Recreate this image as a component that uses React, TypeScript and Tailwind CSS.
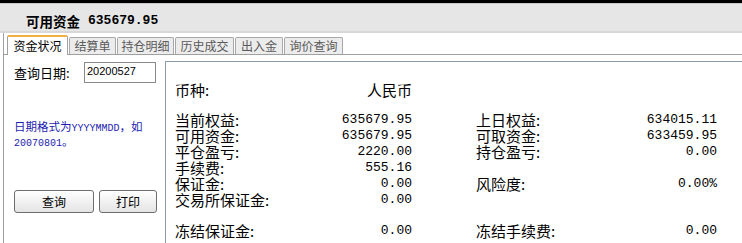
import React from "react";

const cjk = { fontFamily: '"Noto Sans CJK SC", sans-serif' };
const mono = { fontFamily: '"Liberation Mono", "Noto Sans CJK SC", monospace' };

function Cell({ label, value, className = "" }: { label?: string; value?: string; className?: string }) {
  return (
    <div className={"flex h-[16px] items-center justify-between leading-[16px] " + className}>
      <span className="text-[15px] leading-[16px] text-black whitespace-nowrap" style={cjk}>{label}</span>
      <span className="text-[13px] leading-[16px] text-black whitespace-nowrap" style={mono}>{value}</span>
    </div>
  );
}

const tabs = [
  { t: "资金状况", w: 61, active: true },
  { t: "结算单", w: 47 },
  { t: "持仓明细", w: 57 },
  { t: "历史成交", w: 59 },
  { t: "出入金", w: 48 },
  { t: "询价查询", w: 59 },
];

export default function App() {
  return (
    <div className="w-[742px] h-[243px] overflow-hidden bg-white flex flex-col" style={cjk}>
      <div className="h-[3px] bg-black shrink-0" />
      <div className="h-[1px] bg-[#c8c8c8] shrink-0" />
      <div className="h-[29px] bg-[#e6e6e6] shrink-0 flex items-center pl-[26px] pt-[7px] border-b-2 border-[#d8d8d8]">
        <span className="text-[13.5px] font-bold text-black" style={cjk}>可用资金</span>
        <span className="ml-[8px] text-[13px] font-bold text-black" style={mono}>635679.95</span>
      </div>
      <div className="ml-[3px] border-l border-[#a0a0a0] flex-1 flex flex-col">
        <div className="h-[21px] mt-[1px] shrink-0 flex items-end border-b border-[#a0a0a0] pl-[3px]">
          {tabs.map((tab) =>
            tab.active ? (
              <div
                key={tab.t}
                className="relative -mb-[1px] h-[20px] bg-white border-x border-[#a0a0a0] border-t-2 border-t-[#f0b040] rounded-t-[2px] flex items-center justify-center text-[12px] text-black"
                style={{ width: tab.w }}
              >
                {tab.t}
              </div>
            ) : (
              <div
                key={tab.t}
                className="h-[17px] ml-[1px] bg-[#ececec] border border-b-0 border-[#a8a8a8] rounded-t-[2px] flex items-center justify-center text-[12px] text-[#5a5a5a]"
                style={{ width: tab.w }}
              >
                {tab.t}
              </div>
            )
          )}
        </div>
        <div className="flex flex-1">
          <div className="w-[161px] shrink-0 pl-[10px]">
            <div className="mt-[7px] flex items-center h-[21px]">
              <span className="text-[13px] text-black w-[70px] whitespace-nowrap">查询日期:</span>
              <div
                className="w-[72px] h-[21px] border border-[#8a8a8a] bg-white pl-[2px] text-[11px] leading-[17px] text-black"
                style={{ fontFamily: '"Liberation Sans", sans-serif' }}
              >
                20200527
              </div>
            </div>
            <div className="mt-[37px] text-[#1c1cb0] text-[11.5px] leading-[12px]">
              <div className="whitespace-nowrap">
                日期格式为<span className="text-[10px]" style={mono}>YYYYMMDD</span>，如
              </div>
              <div className="whitespace-nowrap">
                <span className="text-[10px]" style={mono}>20070801</span>。
              </div>
            </div>
            <div className="mt-[40px] flex gap-[5px]">
              <button className="w-[80px] h-[23px] rounded-[3px] border border-[#6e6e6e] bg-gradient-to-b from-white to-[#e4e4e4] text-[12px] text-black flex items-center justify-center">
                查询
              </button>
              <button className="w-[58px] h-[23px] rounded-[3px] border border-[#6e6e6e] bg-gradient-to-b from-white to-[#e4e4e4] text-[12px] text-black flex items-center justify-center">
                打印
              </button>
            </div>
          </div>
          <div className="flex-1 mt-[6px] border-l border-t border-[#8c9aa8] pl-[9px] pt-[20px]">
            <div className="grid grid-cols-[237px_241px] gap-x-[64px]">
              <div className="flex h-[16px] items-center justify-between">
                <span className="text-[15px]">币种:</span>
                <span className="text-[15px]">人民币</span>
              </div>
              <div />
            </div>
            <div className="grid grid-cols-[237px_241px] gap-x-[64px] mt-[14px]">
              <Cell label="当前权益:" value="635679.95" />
              <Cell label="上日权益:" value="634015.11" />
              <Cell label="可用资金:" value="635679.95" />
              <Cell label="可取资金:" value="633459.95" />
              <Cell label="平仓盈亏:" value="2220.00" />
              <Cell label="持仓盈亏:" value="0.00" />
              <Cell label="手续费:" value="555.16" />
              <div />
              <Cell label="保证金:" value="0.00" />
              <Cell label="风险度:" value="0.00%" />
              <Cell label="交易所保证金:" value="0.00" />
              <div />
            </div>
            <div className="grid grid-cols-[237px_241px] gap-x-[64px] mt-[15px]">
              <Cell label="冻结保证金:" value="0.00" />
              <Cell label="冻结手续费:" value="0.00" />
            </div>
          </div>
        </div>
      </div>
    </div>
  );
}
